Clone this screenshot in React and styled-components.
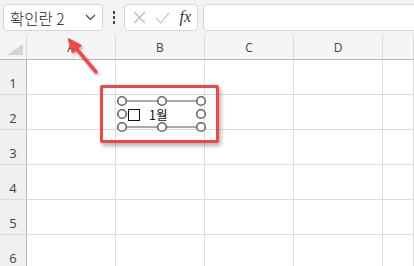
import React from "react";
import styled, { createGlobalStyle } from "styled-components";

const Global = createGlobalStyle`
  html, body { margin: 0; padding: 0; background: #fff; overflow: hidden; }
  body { font-family: "Segoe UI", "Noto Sans", "Noto Sans CJK KR", sans-serif; }
`;

const Page = styled.div`
  position: relative;
  width: 414px;
  height: 266px;
  overflow: hidden;
  background: #fff;
`;

const Toolbar = styled.div`
  display: flex;
  align-items: center;
  height: 35px;
  padding: 0 0 0 3px;
  background: #f3f3f3;
  box-sizing: border-box;
`;

const Box = styled.div`
  display: flex;
  align-items: center;
  height: 27px;
  box-sizing: border-box;
  background: #fff;
  border: 1px solid #d6d6d6;
  border-radius: 4px;
`;

const NameBox = styled(Box)`
  width: 100px;
  padding: 0 6px 0 6px;
  justify-content: space-between;
  font-family: "Noto Sans CJK KR", "Noto Sans", sans-serif;
  font-size: 15.5px;
  font-weight: 300;
  color: #222;
`;

const Dots = styled.div`
  width: 21px;
  display: flex;
  flex-direction: column;
  align-items: center;
  gap: 2.5px;
  span { width: 2px; height: 2.5px; background: #444; }
`;

const FxBox = styled(Box)`
  width: 74px;
  padding: 0 6px 0 8px;
  justify-content: space-between;
`;

const Fx = styled.span`
  font-family: "Liberation Serif", serif;
  font-style: italic;
  font-size: 16px;
  color: #333;
  margin-top: -2px;
`;

const Input = styled(Box)`
  flex: 1;
  margin-left: 5px;
  margin-right: -10px;
`;

const Grid = styled.div`
  display: grid;
  grid-template-columns: 27px 89px 89px 89px 89px 1fr;
  grid-template-rows: 25px repeat(6, 35px);
`;

const Corner = styled.div`
  background: #f5f5f5;
  border-right: 1px solid #dcdcdc;
  border-bottom: 1px solid #b5b5b5;
  display: flex;
  align-items: flex-end;
  justify-content: flex-end;
  padding: 0 3px 4px 0;
  box-sizing: border-box;
`;

const ColHead = styled.div`
  background: #f5f5f5;
  border-right: 1px solid #dcdcdc;
  border-bottom: 1px solid #b5b5b5;
  box-sizing: border-box;
  display: flex;
  align-items: center;
  justify-content: center;
  font-family: "Open Sans", "Noto Sans", sans-serif;
  font-size: 12px;
  color: #444;
`;

const RowHead = styled.div`
  background: #f0f0f0;
  border-right: 1px solid #b5b5b5;
  border-bottom: 1px solid #dcdcdc;
  box-sizing: border-box;
  display: flex;
  align-items: flex-end;
  justify-content: center;
  padding-bottom: 2px;
  font-family: "Open Sans", "Noto Sans", sans-serif;
  font-size: 13px;
  color: #444;
`;

const Cell = styled.div`
  border-right: 1px solid #dcdcdc;
  border-bottom: 1px solid #dcdcdc;
  box-sizing: border-box;
`;

const Control = styled.div`
  position: absolute;
  left: 116px;
  top: 95px;
  width: 92px;
  height: 38px;
`;

const Frame = styled.svg`
  position: absolute;
  left: 0;
  top: 0;
`;

const CheckSquare = styled.div`
  position: absolute;
  left: 12px;
  top: 14px;
  width: 12px;
  height: 12px;
  border: 1px solid #111;
  box-sizing: border-box;
  background: #fff;
`;

const Label = styled.span`
  position: absolute;
  left: 33px;
  top: 10px;
  font-family: "Noto Sans CJK KR", "Noto Sans", sans-serif;
  font-size: 12.5px;
  color: #111;
`;

const Highlight = styled.div`
  position: absolute;
  left: 100px;
  top: 85px;
  width: 119px;
  height: 58px;
  box-sizing: border-box;
  border: 3px solid #f04646;
  border-radius: 2px;
  box-shadow: 2px 3px 4px rgba(0, 0, 0, 0.3);
`;

const Arrow = styled.svg`
  position: absolute;
  left: 0;
  top: 0;
  pointer-events: none;
`;

const cols = ["A", "B", "C", "D", ""];
const rows = [1, 2, 3, 4, 5, 6];

export default function App() {
  const hx = [6, 46, 85];
  const hy = [6, 19, 32];
  return (
    <Page>
      <Global />
      <Toolbar>
        <NameBox>
          <span>확인란 2</span>
          <svg width="11" height="7" viewBox="0 0 11 7">
            <path d="M1 1l4.5 4.5L10 1" fill="none" stroke="#444" strokeWidth="1.2" />
          </svg>
        </NameBox>
        <Dots>
          <span />
          <span />
          <span />
        </Dots>
        <FxBox>
          <svg width="13" height="13" viewBox="0 0 13 13">
            <path d="M1 1l11 11M12 1L1 12" stroke="#b8b8b8" strokeWidth="1.1" />
          </svg>
          <svg width="15" height="12" viewBox="0 0 15 12">
            <path d="M1 6l4.5 5L14 1" fill="none" stroke="#b8b8b8" strokeWidth="1.1" />
          </svg>
          <Fx>fx</Fx>
        </FxBox>
        <Input />
      </Toolbar>
      <Grid>
        <Corner>
          <svg width="16" height="11" viewBox="0 0 16 11">
            <path d="M16 0V11H0z" fill="#d4d4d4" />
          </svg>
        </Corner>
        {cols.map((c, i) => (
          <ColHead key={i}>{c}</ColHead>
        ))}
        {rows.map((r) => (
          <React.Fragment key={r}>
            <RowHead>{r}</RowHead>
            {cols.map((c, i) => (
              <Cell key={i} />
            ))}
          </React.Fragment>
        ))}
      </Grid>
      <Control>
        <Frame width="92" height="38" viewBox="0 0 92 38">
          <path d={`M${hx[0]} ${hy[0]}H${hx[2]}M${hx[0]} ${hy[2]}H${hx[2]}`} stroke="#555" strokeWidth="1.2" />
          {hx.map((x) =>
            hy.map((y) =>
              x === hx[1] && y === hy[1] ? null : (
                <circle key={`${x}-${y}`} cx={x} cy={y} r="4.3" fill="#fff" stroke="#666" strokeWidth="1.6" />
              )
            )
          )}
        </Frame>
        <CheckSquare />
        <Label>1월</Label>
      </Control>
      <Highlight />
      <Arrow width="414" height="266" viewBox="0 0 414 266">
        <defs>
          <filter id="sh" x="-20%" y="-20%" width="150%" height="150%">
            <feDropShadow dx="1.5" dy="2" stdDeviation="1.2" floodColor="#000" floodOpacity="0.25" />
          </filter>
        </defs>
        <g filter="url(#sh)">
          <path d="M96 72L75 47" stroke="#f04646" strokeWidth="3.5" strokeLinecap="round" />
          <path d="M68.5 39L81 45.5L72.5 52.5z" fill="#f04646" stroke="#f04646" strokeWidth="1.5" strokeLinejoin="round" />
        </g>
      </Arrow>
    </Page>
  );
}
